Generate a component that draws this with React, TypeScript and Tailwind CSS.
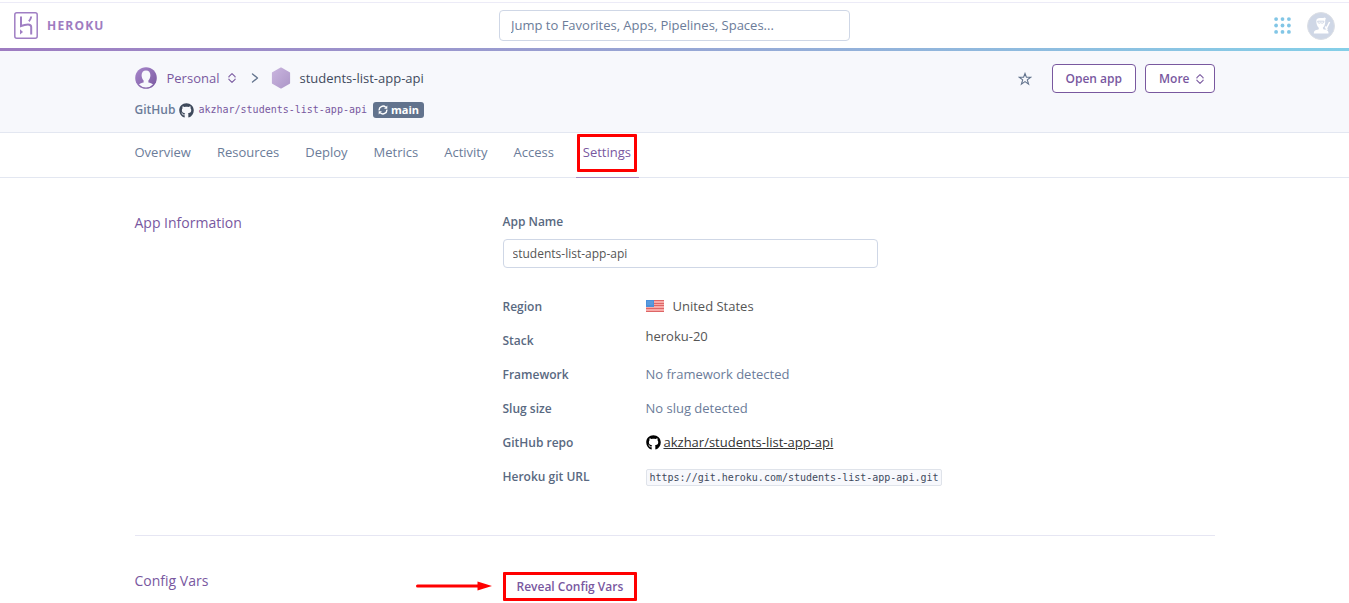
import { useState, type ReactNode } from "react";
import { FaGithub } from "react-icons/fa";

const tabs = ["Overview", "Resources", "Deploy", "Metrics", "Activity", "Access"];

function UpDown() {
  return (
    <svg viewBox="0 0 8 10" className="h-[10px] w-2" fill="none" stroke="currentColor" strokeWidth="1.1" strokeLinecap="round" strokeLinejoin="round" aria-hidden="true">
      <path d="M.9 3.900V3.600L4 .7l3.100 2.900v.3M.9 6.100v.3L4 9.300l3.100-2.900v-.3" />
    </svg>
  );
}

function Chevron() {
  return (
    <svg viewBox="0 0 8 10" className="h-[10px] w-2 text-[#62738d]" fill="none" stroke="currentColor" strokeWidth="1.3" strokeLinecap="round" strokeLinejoin="round" aria-hidden="true">
      <path d="M1.500 1 6.500 5l-5 4" />
    </svg>
  );
}

function Star() {
  return (
    <svg viewBox="0 0 14 14" className="h-[14px] w-[14px]" fill="none" stroke="#62738d" strokeWidth="1.1" strokeLinejoin="miter" aria-hidden="true">
      <path d="M7 1.500 8.400 5.300h4.300L9.300 7.900l1.300 4.200L7 9.600l-3.600 2.500 1.300-4.200L1.300 5.300h4.300z" />
    </svg>
  );
}

function Sync() {
  return (
    <svg viewBox="0 0 10 10" className="h-[10px] w-[10px]" fill="none" stroke="currentColor" strokeWidth="1.4" aria-hidden="true">
      <path d="M1.200 5.400A3.800 3.800 0 0 1 7.700 2.300M8.800 4.600a3.800 3.800 0 0 1-6.500 3.100" />
      <path d="M9.300.6v3.200H6.100zM.7 9.400V6.200h3.200z" fill="currentColor" stroke="none" />
    </svg>
  );
}

function HerokuMark() {
  return (
    <svg viewBox="0 0 24 27" className="h-[27px] w-6" fill="none" stroke="#a07fc4" aria-hidden="true">
      <rect x="0.8" y="0.8" width="22.4" height="25.4" rx="2" strokeWidth="1.5" />
      <path d="M7 4.500v9.500c2.500-1.100 4.800-1.600 7-1.600 2.400 0 3.200 1 3.200 2.600v7.500M17.200 4.500c-.2 1.800-1 3.400-2.300 4.800" strokeWidth="2" />
      <path d="M6 17.300v5.200l3-2.600z" fill="#a07fc4" stroke="none" />
    </svg>
  );
}

function PersonMark() {
  return (
    <svg viewBox="0 0 22 22" className="h-[22px] w-[22px]" aria-hidden="true">
      <defs>
        <linearGradient id="person" x1="0" y1="0" x2="1" y2="1">
          <stop offset="0" stopColor="#a887cc" />
          <stop offset="1" stopColor="#79589f" />
        </linearGradient>
      </defs>
      <circle cx="11" cy="11" r="10.800" fill="url(#person)" />
      <path d="M11 3.400c-2.900 0-4.400 2-4.400 4.900 0 2.200.8 4 2 5.100v2.200c-1.800.4-3.500 1-4.600 1.900A9.700 9.700 0 0 0 11 20.500a9.700 9.700 0 0 0 7-3c-1.100-.9-2.800-1.500-4.600-1.900v-2.200c1.200-1.100 2-2.900 2-5.100 0-2.900-1.500-4.900-4.400-4.900z" fill="#f7f8fc" />
    </svg>
  );
}

function Hexagon() {
  return (
    <svg viewBox="0 0 20 22" className="h-[22px] w-5" aria-hidden="true">
      <defs>
        <linearGradient id="hex" x1="0" y1="0" x2="1" y2="1">
          <stop offset="0" stopColor="#c9b4de" />
          <stop offset="1" stopColor="#ad97c8" />
        </linearGradient>
      </defs>
      <path d="M10 1.300 18.300 6v10L10 20.700 1.700 16V6z" fill="url(#hex)" stroke="url(#hex)" strokeWidth="1.600" strokeLinejoin="round" />
    </svg>
  );
}

function AppDots() {
  return (
    <svg viewBox="0 0 17 17" className="h-[17px] w-[17px]" fill="#82c6e6" aria-hidden="true">
      {[2.1, 8.5, 14.9].map((y) => [2.1, 8.5, 14.9].map((x) => <circle key={`${x}-${y}`} cx={x} cy={y} r="1.9" />))}
    </svg>
  );
}

function Ninja() {
  return (
    <svg viewBox="0 0 28 28" className="h-7 w-7" aria-hidden="true">
      <circle cx="14" cy="14" r="13.500" fill="#cfd7e6" stroke="#dcdfe5" />
      <path d="M9.300 9c0-2.200 1.500-2.900 3.700-2.900 1.800 0 3 .2 4.900-.6l1 .9-.7 1.500c.3 3.600-.7 6.200-2.400 7.900l.5 1.400 3 .8c1.800.5 2.200 1.600 2.200 3.500H6.800c0-2 .6-3 2.400-3.500l2.300-.6.4-1.500C10 14.200 9.300 11.800 9.300 9z" fill="#fff" />
      <path d="m22.600 10-3.700 7.500M18.300 14.500l2 3.300" stroke="#fff" strokeWidth="1.500" fill="none" />
      <path d="M10.700 9.200h6.200c0 1.400-.7 2-1.600 2-.8 0-1.200-.4-1.500-.8-.3.4-.7.8-1.500.8-.9 0-1.600-.6-1.600-2z" fill="none" stroke="#cfd7e6" strokeWidth="1" />
    </svg>
  );
}

function Flag() {
  return (
    <svg viewBox="0 0 18 12" className="h-3 w-[18px]" aria-hidden="true">
      <rect width="18" height="12" rx="1" fill="#f8aaa8" />
      <path d="M0 .5h18M0 3.500h18M0 5.500h18M0 8.500h18M0 11.500h18" stroke="#dd6666" strokeWidth="1" />
      <path d="M0 0h8v7H0z" fill="#4a90d9" />
      <path d="M1.500 2h5M1.500 4h5" stroke="#86b9ec" strokeWidth="1" strokeDasharray="1 1" />
    </svg>
  );
}

function Arrow() {
  return (
    <svg viewBox="0 0 76 10" className="absolute top-[9px] right-full mr-[11px] h-[10px] w-[76px]" aria-hidden="true">
      <path d="M1.500 5H64" stroke="#ff0000" strokeWidth="3" strokeLinecap="round" />
      <path d="M61.500.5 76 5 61.500 9.500z" fill="#ff0000" />
    </svg>
  );
}

function Row({ label, children }: { label: string; children: ReactNode }) {
  return (
    <div className="flex h-[34px] items-start">
      <dt className="w-[143px] shrink-0 text-[12px] font-semibold text-[#596981]">{label}</dt>
      <dd className="leading-[18px] text-[#6b7c99]">{children}</dd>
    </div>
  );
}

export default function App() {
  const [name, setName] = useState("students-list-app-api");
  return (
    <div className="bg-white font-['Open_Sans',sans-serif] text-[13px] leading-5 text-[#555]">
      <header className="mt-[2px] border-t border-[#ecebf7]">
        <div className="grid h-[45px] grid-cols-[1fr_351px_1fr] items-center px-[14px]">
          <a href="#home" className="flex items-center gap-[9px] text-[12px] font-bold tracking-widest text-[#9e7cc1]">
            <HerokuMark />
            HEROKU
          </a>
          <input aria-label="Jump to" placeholder="Jump to Favorites, Apps, Pipelines, Spaces..." className="h-[31px] w-full rounded border border-[#cfd7e6] px-[11px] pb-[2px] text-[13px] text-[#6b7c99] outline-none placeholder:text-[#6b7c99]" />
          <div className="flex items-center justify-end gap-4">
            <button aria-label="Applications"><AppDots /></button>
            <button aria-label="Account"><Ninja /></button>
          </div>
        </div>
        <div className="h-[3px] bg-linear-to-r from-[#9e7cc1] to-[#84cfe8]" />
      </header>

      <section className="border-b border-[#e3e7f1] bg-[#f7f8fc]">
        <div className="mx-auto flex h-[81px] max-w-[1080px] items-start justify-between pt-[13px]">
          <div>
            <div className="flex h-7 items-center">
              <PersonMark />
              <a href="#personal" className="ml-[10px] text-[#79589f]">Personal</a>
              <button aria-label="Switch account" className="ml-[9px] text-[#79589f]"><UpDown /></button>
              <span className="mr-3 ml-[15px]"><Chevron /></span>
              <span className="flex items-center gap-2 text-[#3f4a5c]"><Hexagon />students-list-app-api</span>
            </div>
            <div className="mt-2 flex h-5 items-center">
              <span className="text-[12px] font-semibold text-[#6b7c99]">GitHub</span>
              <FaGithub className="ml-1 text-[15px] text-[#3f4a5c]" />
              <a href="#repo" className="ml-1 font-['DejaVu_Sans_Mono',monospace] text-[10px] text-[#79589f]">akzhar/students-list-app-api</a>
              <span className="ml-[6px] flex h-4 items-center gap-[3px] rounded-[3px] bg-[#62738d] px-[5px] text-[11px] font-bold text-white"><Sync />main</span>
            </div>
          </div>
          <div className="flex items-center">
            <button aria-label="Favorite" className="mr-5"><Star /></button>
            <button className="mr-[9px] h-[29px] rounded border border-[#79589f] bg-white px-[13px] text-[12px] font-semibold text-[#79589f]">Open app</button>
            <button className="flex h-[29px] items-center gap-[6px] rounded border border-[#79589f] bg-white pr-[10px] pl-[13px] text-[12px] font-semibold text-[#79589f]">More <UpDown /></button>
          </div>
        </div>
      </section>

      <nav className="border-b border-[#e3e7f1]">
        <div className="mx-auto flex h-11 max-w-[1080px] items-start gap-[26px]">
          {tabs.map((t) => (
            <a key={t} href={`#${t}`} className="pt-[9px] text-[#6b7c99]">{t}</a>
          ))}
          <a href="#Settings" aria-current="page" className="-ml-1 flex h-[45px] flex-col border-b border-[#a58bc4] pr-[2px] pl-px text-[#79589f]">
            <span className="mt-px flex h-[38px] w-[60px] items-start justify-center rounded-[1px] border-3 border-[#ff0000] pt-[5px]">Settings</span>
          </a>
        </div>
      </nav>

      <main className="mx-auto max-w-[1080px]">
        <section className="grid grid-cols-[368px_1fr] border-b border-[#e6e6f3] pt-[34px] pb-[34px]">
          <h2 className="text-[14px] leading-[22px] text-[#79589f]">App Information</h2>
          <div>
            <label htmlFor="app-name" className="block text-[12px] font-semibold text-[#596981]">App Name</label>
            <input id="app-name" value={name} onChange={(e) => setName(e.target.value)} className="mt-[7px] block h-[29px] w-[375px] rounded border border-[#cfd7e6] px-[9px] text-[12px] text-[#555] outline-none" />
            <dl className="mt-[29px]">
              <Row label="Region"><span className="flex items-center gap-[9px] text-[#555]"><Flag />United States</span></Row>
              <Row label="Stack"><span className="block leading-[10px] text-[#555]">heroku-20</span></Row>
              <Row label="Framework">No framework detected</Row>
              <Row label="Slug size">No slug detected</Row>
              <Row label="GitHub repo"><a href="#github" className="flex items-center gap-[3px] text-[#333]"><FaGithub className="text-[15px] text-black" /><span className="underline">akzhar/students-list-app-api</span></a></Row>
              <Row label="Heroku git URL"><code className="mt-[2px] block h-[17px] rounded-[2px] border border-[#dfe3ea] bg-[#f7f8fc] px-[3px] font-['DejaVu_Sans_Mono',monospace] text-[10px] leading-[15px] text-[#3f4a5c]">https://git.heroku.com/students-list-app-api.git</code></Row>
            </dl>
          </div>
        </section>
        <section className="grid grid-cols-[368px_1fr] pt-[36px] pb-[2px]">
          <h2 className="text-[14px] leading-[18px] text-[#79589f]">Config Vars</h2>
          <div className="flex">
            <div className="relative">
              <Arrow />
              <button className="block h-[29px] rounded-[1px] border-3 border-[#ff0000] px-[11px] text-[12px] leading-5 font-semibold text-[#79589f]">Reveal Config Vars</button>
            </div>
          </div>
        </section>
      </main>
    </div>
  );
}
